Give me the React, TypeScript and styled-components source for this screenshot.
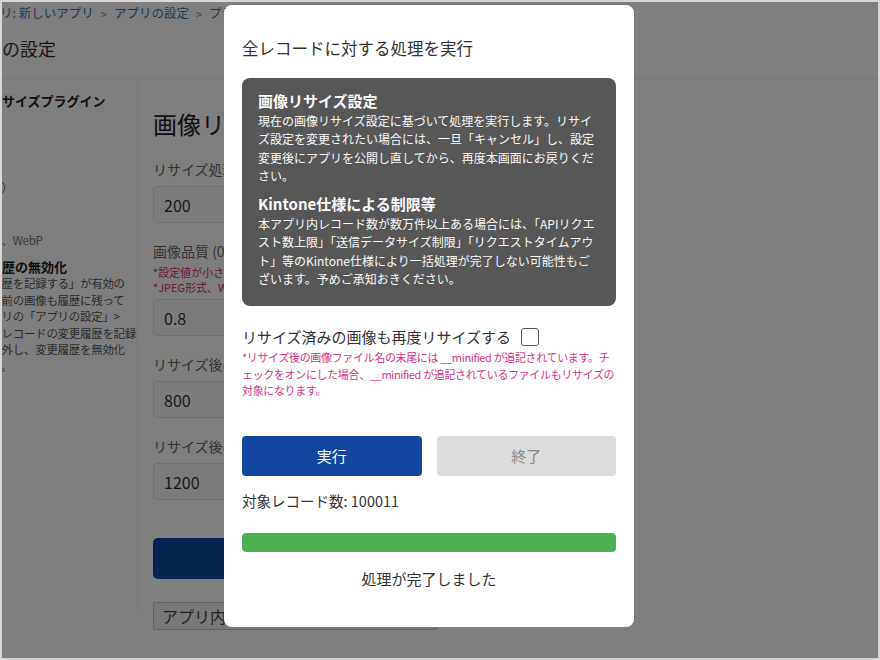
import React from "react";
import styled, { createGlobalStyle } from "styled-components";

const GlobalStyle = createGlobalStyle`
  html, body {
    margin: 0;
    padding: 0;
  }
  body {
    font-family: "Noto Sans CJK JP", "Noto Sans", sans-serif;
    color: #333;
  }
  * {
    box-sizing: border-box;
  }
`;

const App = () => {
  const fields = [
    { label: "リサイズ処理を行う最小ファイルサイズ (KB)", value: "200" },
    {
      label: "画像品質 (0.1〜1.0)",
      value: "0.8",
      notes: [
        "*設定値が小さいほど画質が低下し、ファイルサイズが小さくなります。",
        "*JPEG形式、WebP形式の画像のみに適用されます。",
      ],
    },
    { label: "リサイズ後の最大幅 (px)", value: "800" },
    { label: "リサイズ後の最大高さ (px)", value: "1200" },
  ];
  const total = 100011;
  const done = 100011;

  return (
    <>
      <GlobalStyle />
      <Frame>
        <Page>
          <Breadcrumb>
            <Crumb>アプリ: 新しいアプリ</Crumb>
            <Sep>&gt;</Sep>
            <Crumb>アプリの設定</Crumb>
            <Sep>&gt;</Sep>
            <Crumb>プラグインの設定</Crumb>
          </Breadcrumb>
          <PageTitle>プラグインの設定</PageTitle>
          <Body>
            <Sidebar>
              <SideTitle>画像リサイズプラグイン</SideTitle>
              <SideGap $h={70} />
              <SideText>（任意）</SideText>
              <SideGap $h={36} />
              <SideText $muted>その他、WebP</SideText>
              <SideTitle $top={10}>変更履歴の無効化</SideTitle>
              <SideText>変更履歴を記録する」が有効の</SideText>
              <SideText>、更新前の画像も履歴に残って</SideText>
              <SideText>、アプリの「アプリの設定」&gt;</SideText>
              <SideText>から「レコードの変更履歴を記録</SideText>
              <SideText>る」を外し、変更履歴を無効化</SideText>
              <SideText>します。</SideText>
            </Sidebar>
            <Main>
              <MainTitle>画像リサイズ設定</MainTitle>
              {fields.map((f) => (
                <Field key={f.label}>
                  <FieldLabel>{f.label}</FieldLabel>
                  {f.notes && (
                    <FieldNotes>
                      {f.notes.map((n) => (
                        <p key={n}>{n}</p>
                      ))}
                    </FieldNotes>
                  )}
                  <TextInput defaultValue={f.value} readOnly />
                </Field>
              ))}
              <SaveButton>保存</SaveButton>
              <BulkButton>アプリ内の全レコードに対して処理を実行</BulkButton>
            </Main>
          </Body>

          <Overlay>
            <Modal>
              <ModalTitle>全レコードに対する処理を実行</ModalTitle>
              <InfoBox>
                <InfoHeading>画像リサイズ設定</InfoHeading>
                <InfoText>
                  現在の画像リサイズ設定に基づいて処理を実行します。リサイズ設定を変更されたい場合には、一旦「キャンセル」し、設定変更後にアプリを公開し直してから、再度本画面にお戻りください。
                </InfoText>
                <InfoHeading $top={8}>Kintone仕様による制限等</InfoHeading>
                <InfoText>
                  本アプリ内レコード数が数万件以上ある場合には、「APIリクエスト数上限」「送信データサイズ制限」「リクエストタイムアウト」等のKintone仕様により一括処理が完了しない可能性もございます。予めご承知おきください。
                </InfoText>
              </InfoBox>
              <CheckRow>
                リサイズ済みの画像も再度リサイズする
                <CheckBox type="checkbox" />
              </CheckRow>
              <CheckNote>
                *リサイズ後の画像ファイル名の末尾には __minified
                が追記されています。チェックをオンにした場合、__minified
                が追記されているファイルもリサイズの対象になります。
              </CheckNote>
              <ButtonRow>
                <ActionButton $variant="primary">実行</ActionButton>
                <ActionButton $variant="muted">終了</ActionButton>
              </ButtonRow>
              <CountText>対象レコード数: {total}</CountText>
              <ProgressTrack>
                <ProgressFill style={{ width: `${(done / total) * 100}%` }} />
              </ProgressTrack>
              <StatusText>処理が完了しました</StatusText>
            </Modal>
          </Overlay>
        </Page>
      </Frame>
    </>
  );
};

export default App;

const Frame = styled.div`
  width: 880px;
  height: 660px;
  border: 2px solid #d6d6d6;
  overflow: hidden;
`;

const Page = styled.div`
  position: relative;
  width: 100%;
  height: 100%;
  background: #fff;
  overflow: hidden;
`;

const Breadcrumb = styled.div`
  display: flex;
  align-items: center;
  gap: 7px;
  margin-left: -27px;
  padding-top: 1px;
  height: 20px;
  font-size: 12.5px;
  white-space: nowrap;
`;

const Crumb = styled.span`
  color: #3b76b0;
`;

const Sep = styled.span`
  color: #888;
  font-size: 11px;
  margin-top: 3px;
`;

const PageTitle = styled.h1`
  margin: 13px 0 0 -90px;
  font-size: 18px;
  font-weight: 400;
  line-height: 26px;
  color: #333;
  white-space: nowrap;
  padding-bottom: 17px;
  border-bottom: 1px solid #ececec;
`;

const Body = styled.div`
  display: flex;
  margin-left: -36px;
  height: 560px;
`;

const Sidebar = styled.div`
  width: 172px;
  flex-shrink: 0;
  padding-top: 13px;
  border-right: 1px solid #ededed;
  margin-bottom: 28px;
  white-space: nowrap;
  overflow: hidden;
`;

const SideTitle = styled.div<{ $top?: number }>`
  margin: ${({ $top }) => $top ?? 0}px 0 0 -3px;
  font-size: 13px;
  font-weight: 700;
  line-height: 17px;
  color: #222;
`;

const SideGap = styled.div<{ $h: number }>`
  height: ${({ $h }) => $h}px;
`;

const SideText = styled.div<{ $muted?: boolean }>`
  padding-left: 2px;
  font-size: 11.5px;
  line-height: 16.5px;
  letter-spacing: -0.3px;
  color: ${({ $muted }) => ($muted ? "#777" : "#555")};
`;

const Main = styled.div`
  flex: 1;
  padding: 29px 0 0 15px;
  display: flex;
  flex-direction: column;
  align-items: flex-start;
`;

const MainTitle = styled.h2`
  margin: 0 0 1px;
  font-size: 24px;
  font-weight: 400;
  line-height: 32px;
  color: #222;
  white-space: nowrap;
`;

const Field = styled.div`
  margin-top: 18px;
  display: flex;
  flex-direction: column;
`;

const FieldLabel = styled.label`
  font-size: 14px;
  line-height: 20px;
  color: #666;
  white-space: nowrap;
  margin-bottom: 7px;
`;

const FieldNotes = styled.div`
  margin: -3px 0 4px;
  p {
    margin: 0;
    font-size: 11px;
    line-height: 15px;
    color: #d63366;
    white-space: nowrap;
  }
`;

const TextInput = styled.input`
  width: 380px;
  height: 37px;
  border: 1px solid #e0e0e0;
  border-radius: 4px;
  padding: 0 10px;
  font-family: inherit;
  font-size: 16px;
  color: #333;
  background: #f8f8f8;
`;

const SaveButton = styled.button`
  margin-top: 38px;
  width: 284px;
  height: 41px;
  border: none;
  border-radius: 5px;
  background: #11479e;
  color: #fff;
  font-family: inherit;
  font-size: 15px;
`;

const BulkButton = styled.button`
  margin-top: 23px;
  width: 284px;
  height: 28px;
  border: 1px solid #c4c4c4;
  border-radius: 2px;
  background: #f2f2f2;
  color: #444;
  font-family: inherit;
  font-size: 16px;
  text-align: left;
  padding: 0 8px;
  white-space: nowrap;
  overflow: hidden;
`;

const Overlay = styled.div`
  position: absolute;
  inset: 0;
  background: rgba(0, 0, 0, 0.5);
  padding: 3px 0 0 222px;
`;

const Modal = styled.div`
  width: 410px;
  height: 622px;
  background: #fff;
  border-radius: 8px;
  padding: 18px 18px 0;
  display: flex;
  flex-direction: column;
`;

const ModalTitle = styled.h3`
  margin: 13px 0 18px;
  font-size: 16.5px;
  font-weight: 400;
  line-height: 24px;
  color: #333;
`;

const InfoBox = styled.div`
  background: #575757;
  border-radius: 8px;
  padding: 12px 16px 18px;
  color: #fafafa;
`;

const InfoHeading = styled.div<{ $top?: number }>`
  margin-top: ${({ $top }) => $top ?? 0}px;
  font-size: 15px;
  font-weight: 700;
  line-height: 22px;
`;

const InfoText = styled.p`
  margin: 0;
  font-size: 12px;
  line-height: 18.3px;
`;

const CheckRow = styled.label`
  margin-top: 19px;
  display: flex;
  align-items: center;
  gap: 10px;
  font-size: 15px;
  line-height: 24px;
  color: #333;
`;

const CheckBox = styled.input`
  appearance: none;
  margin: 0;
  width: 18px;
  height: 18px;
  border: 1.5px solid #555;
  border-radius: 3px;
  background: #fff;
`;

const CheckNote = styled.p`
  margin: 0;
  font-size: 11px;
  line-height: 16.5px;
  color: #d63384;
  letter-spacing: -0.35px;
`;

const ButtonRow = styled.div`
  margin-top: 37px;
  display: grid;
  grid-template-columns: 1fr 1fr;
  gap: 15px;
`;

const ActionButton = styled.button<{ $variant: "primary" | "muted" }>`
  height: 40px;
  border: none;
  border-radius: 4px;
  font-family: inherit;
  font-size: 15px;
  background: ${({ $variant }) => ($variant === "primary" ? "#11479e" : "#dcdcdc")};
  color: ${({ $variant }) => ($variant === "primary" ? "#fff" : "#8a8a8a")};
`;

const CountText = styled.div`
  margin-top: 15px;
  font-size: 14.5px;
  line-height: 20px;
  color: #333;
`;

const ProgressTrack = styled.div`
  margin-top: 22px;
  height: 19px;
  border-radius: 4px;
  background: #e6e6e6;
  overflow: hidden;
`;

const ProgressFill = styled.div`
  height: 100%;
  background: #4caf50;
  border-radius: 4px;
`;

const StatusText = styled.div`
  margin-top: 16px;
  text-align: center;
  font-size: 15px;
  line-height: 22px;
  color: #333;
`;
